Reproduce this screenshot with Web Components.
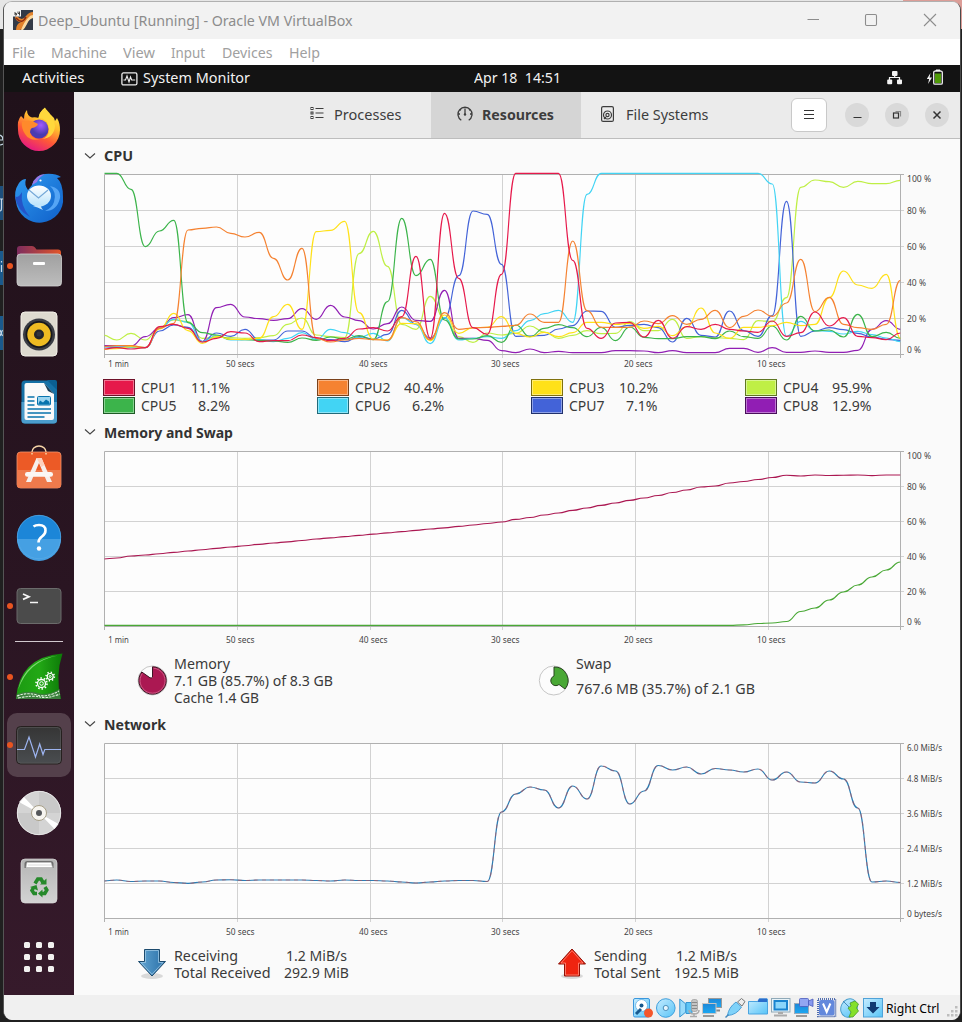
<!DOCTYPE html>
<html lang="en">
<head>
<meta charset="utf-8">
<title>Deep_Ubuntu [Running] - Oracle VM VirtualBox</title>
<style>
html,body{margin:0;height:100%;overflow:hidden;background:#1f1f1f}
body{font-family:"Noto Sans","Liberation Sans",sans-serif}
</style>
</head>
<body>
<desktop-view></desktop-view>
<script>
const define=(name,html,init)=>customElements.define(name,class extends HTMLElement{
  constructor(){super();this.attachShadow({mode:'open'})}
  connectedCallback(){this.shadowRoot.innerHTML=typeof html==='function'?html(this):html;if(init)init(this)}
});

/* Text run condensed or widened to a set width */
define('fit-text',el=>`<style>:host{display:block;flex:none;width:${el.getAttribute('w')}px;white-space:pre;overflow:visible}
span{display:inline-block;transform-origin:0 50%}</style><span></span>`,el=>{
  const s=el.shadowRoot.querySelector('span');s.textContent=el.getAttribute('t');
  const n=s.getBoundingClientRect().width;
  s.style.transform=`scaleX(${el.getAttribute('w')/n})`;
});
const T=(t,w,x=0,extra='')=>`<fit-text t="${t}" w="${w}" style="margin-left:${x}px;${extra}"></fit-text>`;

define('title-bar',`<style>:host{display:flex;height:37px;align-items:center;background:#f2f2f2;color:#8c8c8c;font-size:15px;padding-left:9px;box-sizing:border-box}
.i{display:block;flex:none}.v{margin-top:-2px}.c{margin-left:auto}fit-text{margin-top:-2px}</style>
<svg class="i v" width="20" height="20" viewBox="0 0 20 20"><rect width="20" height="20" fill="#333a47"/>
<path d="M4 6q5 6 9 0q3-4 7-4v6q-4 0-6 5q-2 5-7 7H3q0-6 5-8Q3 12 2 7z" fill="#e2822c"/><path d="M8 20q3-8 7-12q2-3 5-3v3q-4 1-6 6q-2 4-4 6z" fill="#fbd9a0"/><path d="M3 8q6 7 10-1" stroke="#8b2a10" stroke-width="1.500" fill="none"/><rect width="8" height="6.500" fill="#f4f4f4"/><path d="M2 2v3h1.500V3.500H2M5 1.500v2h1.500M6.500 1.500v4" stroke="#333" fill="none" stroke-width=".9"/></svg>
${T('Deep_Ubuntu [Running] - Oracle VM VirtualBox',314.5,5)}
<svg class="i c" width="153" height="37" viewBox="807 2 153 37" fill="none" stroke="#8d8d8d" stroke-width="1.100"><path d="M807.500 19.500h11.500M924 14l12 12M936 14l-12 12"/><rect x="865.500" y="14.500" width="11" height="11" rx="1.200"/></svg>`);

define('menu-bar',`<style>:host{display:flex;height:26px;line-height:27px;background:#fff;color:#a0a0a0;font-size:15px;padding-left:8px}</style>
${T('File',23)}${T('Machine',56,16)}${T('View',32,16)}${T('Input',34,16)}${T('Devices',50.5,17)}${T('Help',31,16.500)}`);

define('top-panel',`<style>:host{display:flex;height:27px;line-height:24px;background:#131313;color:#f2f2f2;font-size:14.300px;padding-left:18px;align-items:center}svg{flex:none}fit-text{height:26px}</style>
${T('Activities',62.5)}
<svg style="margin-left:36px" width="17" height="14" viewBox="0 0 17 14" fill="none" stroke="#eee" stroke-width="1.300"><rect x=".9" y=".9" width="15" height="12" rx="1.500"/><path d="M2.500 8h2l1.500-4l2 6l1.500-5l1.200 3h3.500" stroke-width="1.100"/></svg>
${T('System Monitor',107,5)}${T('Apr 18  14:51',87,224.500)}
<svg style="margin-left:326px" width="60" height="27" viewBox="887 65 60 27" fill="#f2f2f2"><rect x="892" y="71" width="5.500" height="5" rx="1"/><rect x="887.200" y="79.500" width="5" height="4.700" rx="1"/><rect x="897" y="79.500" width="5" height="4.700" rx="1"/><path d="M894.700 75v3M889.500 80v-2.500h10V80" fill="none" stroke="#f2f2f2" stroke-width="1.200"/>
<path d="M930.500 73l-3.700 6h2.300l-1 5l3.900-6.500h-2.400z"/><path d="M936 71v-1h4v1" stroke="#f2f2f2"/><rect x="933.700" y="71.200" width="8.600" height="13" rx="1.300" fill="none" stroke="#f2f2f2" stroke-width="1.300"/><rect x="935" y="73.500" width="6" height="9.500" fill="#4e9a06"/></svg>`);

/* Launcher artwork; every tile is 70x68 on a shared column */
const dockArt=[
[96,`<defs><linearGradient id="a" x1=".8" y1="0" x2=".3" y2="1"><stop offset="0" stop-color="#fff44f"/><stop offset=".35" stop-color="#ffbd2e"/><stop offset=".65" stop-color="#ff5a36"/><stop offset="1" stop-color="#e31587"/></linearGradient><radialGradient id="b" cx=".6" cy=".3"><stop offset="0" stop-color="#a35bff"/><stop offset="1" stop-color="#4b3bb0"/></radialGradient></defs>
<path d="M38.500 118Q40 111 45 107.500Q46 113 51 115Q54 117 55 121L57 118Q60 123 60 130A21 21 0 0 1 18 130Q17 120 21 116L24 119Q24 113 27 110Q27 116 32 117.500Q36 117 38.500 118z" fill="url(#a)"/><circle cx="39" cy="129" r="9.500" fill="url(#b)"/><path d="M22 122Q30 118 38 124Q37 127 32 128Q30 129 30 133Q33 140 41 139Q30 142 25 134Q21 128 22 122z" fill="#ff8a2b"/><path d="M38.500 118Q48 118 49 129Q49 137 42 139Q54 138 55 126Q54 117 45 108Q39 112 38.500 118Z" fill="#ffd83c"/>`],
[166,`<defs><linearGradient id="a" x1="0" y1="0" x2="1" y2="1"><stop offset="0" stop-color="#2f9bf0"/><stop offset="1" stop-color="#0f5fc9"/></linearGradient><linearGradient id="b" x1="0" y1="0" x2="0" y2="1"><stop offset="0" stop-color="#fff"/><stop offset="1" stop-color="#b9e3fb"/></linearGradient></defs>
<path d="M32 187Q35 177 45 176Q55 175 61 179L57 180Q63 185 63 199A23.500 23 0 0 1 16 204Q13 194 19 185Q22 181 26 181Q24 187 28 192z" fill="url(#a)"/><path d="M32 187Q35 177 45 176Q38 180 37 184z" fill="#9a78e5"/><path d="M15 198Q17 213 30 219Q20 208 22 194Q18 201 15 198z" fill="#2454c8"/><path d="M50 188Q57 194 54 204Q52 210 45 213Q57 213 60 200Q61 190 50 188z" fill="#55a5f5"/><ellipse cx="39" cy="198" rx="12" ry="10.500" fill="url(#b)"/><path d="M29 192l9.500 8l9.500-8" fill="none" stroke="#76a9d8" stroke-width="1.200"/><path d="M33 208q4 1 10 4q-3-4-2-5z" fill="#c8e8fb"/><circle cx="40.500" cy="182.500" r="1.100" fill="#fff"/>`],
[232,`<defs><linearGradient id="a"><stop offset="0" stop-color="#7d2c5e"/><stop offset="1" stop-color="#e2562a"/></linearGradient><linearGradient id="b" x1="0" y1="0" x2="0" y2="1"><stop offset="0" stop-color="#a0a0a0"/><stop offset="1" stop-color="#bdbdbd"/></linearGradient></defs><path d="M17 260v-11q0-3 3-3h12q2 0 3 1.500l1.500 2H58q3 0 3 3v9z" fill="url(#a)"/><rect x="17" y="254" width="44.500" height="32" rx="3.500" fill="url(#b)" stroke="#d2d2d2" stroke-width=".8"/><rect x="33" y="262" width="12" height="3" rx="1" fill="#fff"/>`,1],
[300,`<rect x="21" y="312" width="36" height="44" rx="4" fill="#dedad0" stroke="#f3f0e8"/><circle cx="39" cy="334.500" r="16" fill="#3a3c44"/><circle cx="39" cy="334.500" r="13.500" fill="#17181d"/><circle cx="39" cy="334.500" r="11.700" fill="#eebb22"/><circle cx="39" cy="334.500" r="5" fill="#23252b"/><circle cx="39" cy="334" r="2.500" fill="#32353d"/>`],
[368,`<path d="M21.500 384q0-3.500 3.500-3.500h24l8 8.500v31q0 3.500-3.500 3.500H25q-3.500 0-3.500-3.500z" fill="#1671a6"/><path d="M21.500 402H57v18q0 3.500-3.500 3.500H25q-3.500 0-3.500-3.500z" fill="#4b9dcc"/><path d="M24.500 385q0-2 2-2H44l10 11v24q0 2-2 2H26.500q-2 0-2-2z" fill="#fafafa"/><path d="M47 380h8q2 0 2 2v8z" fill="#0b5f92"/><path d="M44 383l10 11-6-3z" fill="#173e59"/><path d="M27.500 397h7M27.500 401h7M27.500 405h7M27.500 409h23.500M27.500 413h23.500M27.500 417h17" stroke="#0874ad" stroke-width="1.700"/><rect x="37.500" y="396.500" width="13" height="8.500" rx="1" fill="#9bd4ef" stroke="#0874ad"/><path d="M38 404.500l2-4 3 2 3-3 3 2 1 3z" fill="#0874ad"/>`],
[436,`<path d="M32 456V452a7 6 0 0 1 14 0V456" fill="none" stroke="#f7d6a8" stroke-width="1.500"/><rect x="17" y="452" width="44" height="36" rx="3.500" fill="#ec5a26" stroke="#f3956e" stroke-width=".8"/><path d="M17 470h44v14.500q0 3.500-3.500 3.500h-37q-3.500 0-3.500-3.500z" fill="#ef7a4c"/><path d="M32 453v1.500M46 453v1.500" stroke="#f7d6a8" stroke-width="1.500"/><path d="M36.500 458h5l10.500 24h-5l-8-19-8 19h-5z" fill="#f6efec"/><rect x="25" y="472" width="28" height="4.700" rx="2.300" fill="#fbf7f4"/><path d="M36.500 458l5 0 3 7-3 2z" fill="#ffd0bb"/>`],
[505,`<circle cx="39" cy="538" r="22" fill="#1c86d8"/><path d="M17 540h44a22 22 0 0 1-44 0z" fill="#45a0e3"/><circle cx="39" cy="538" r="21.700" fill="none" stroke="#59abe5" stroke-width=".7"/><path d="M33.500 527.500q2-1.500 5.500-1.500q6.500 0 6.500 5.500q0 3.500-3.500 6t-3.500 6" fill="none" stroke="#fff" stroke-width="2.600"/><circle cx="39" cy="549.500" r="2.200" fill="#fff"/>`],
[572,`<rect x="17" y="588.500" width="44" height="35" rx="3.500" fill="#4b4b4b" stroke="#6b6b6b"/><path d="M23 594l6 2.700-6 2.700" fill="none" stroke="#f5f5f5" stroke-width="1.700"/><path d="M30 602.500h8" stroke="#f5f5f5" stroke-width="1.500"/>`,1],
null,
[643,`<defs><linearGradient id="a"><stop offset="0" stop-color="#1c9a12"/><stop offset=".5" stop-color="#22a815"/><stop offset="1" stop-color="#0d7a08"/></linearGradient></defs><path d="M16 699Q19 657 62.500 653.500Q55 676 61 699z" fill="url(#a)"/><path d="M18 690Q25 660 58 655.500Q28 661 18 690z" fill="#7fd873"/><path d="M17 694q11-4 21-1t21.500-4l1 10H16z" fill="#3b7f3c"/><path d="M17 696q10-4 20-1t22-4M18 698q15-3 22-1t20-3" stroke="#e1f3df" fill="none" stroke-width="1.100" stroke-dasharray="2.500 1"/><g fill="none" stroke="#fff"><circle cx="41.500" cy="683.500" r="4" stroke-width="1.300"/><circle cx="41.500" cy="683.500" r="5.500" stroke-width="1.600" stroke-dasharray="1.500 1.950"/><circle cx="41.500" cy="683.500" r="1.800"/><circle cx="50.200" cy="676.500" r="3" stroke-width="1.200"/><circle cx="50.200" cy="676.500" r="4.200" stroke-width="1.500" stroke-dasharray="1.300 2"/><circle cx="50.200" cy="676.500" r="1"/></g>`,1],
[711,`<rect x="7" y="713" width="64" height="64" rx="10" fill="#54404b"/><defs><linearGradient id="a" x1="0" y1="0" x2="0" y2="1"><stop offset="0" stop-color="#353535"/><stop offset="1" stop-color="#4a4d50"/></linearGradient></defs><rect x="16.500" y="726.500" width="45" height="37.500" rx="4" fill="url(#a)" stroke="#26201f"/><rect x="17.500" y="727.500" width="43" height="35.500" rx="3.500" fill="none" stroke="#5d5d5d" stroke-width=".6"/><path d="M17 749.500h7.500L29 737l6.500 20 4.200-13 3.300 10.500 1.800-5H61" fill="none" stroke="#9db4f0" stroke-width="1.200"/>`,1],
[779,`<circle cx="39" cy="813" r="22" fill="#d4d4d4"/><path d="M39 813L39 791A22 22 0 0 1 61 813zM39 813V835A22 22 0 0 1 17 813z" fill="#c9c9c9"/><path d="M39 813L19 802L24 797zM39 813L54.500 829L58.500 824z" fill="#fff"/><circle cx="39" cy="813" r="21.700" fill="none" stroke="#eee" stroke-width=".8"/><circle cx="39" cy="813" r="7.500" fill="#f7f5f0" stroke="#a79f88"/><circle cx="39" cy="813" r="3" fill="#55575a"/>`],
[847,`<defs><linearGradient id="a" x1="0" y1="0" x2="0" y2="1"><stop offset="0" stop-color="#b4b4b4"/><stop offset="1" stop-color="#d3d3d3"/></linearGradient></defs><rect x="21" y="859" width="36" height="44" rx="4" fill="url(#a)" stroke="#dadada" stroke-width=".7"/><path d="M24.500 868v-4q0-3 3-3h23q3 0 3 3v4z" fill="#6f6f6f"/><path d="M26 867.500l1-5h24l1.500 5zM28 865h24" fill="#fff" stroke="#c2c2c2" stroke-width=".6"/><g fill="none" stroke="#26892b" stroke-width="3.600"><path d="M35 883.500l2.800-4.500h3.200l2 3.500M45 887l1.800 3-2 3.500h-3M37 893.500H34l-2-3 1.600-3"/></g><g fill="#26892b"><path d="M40 884.500l6.500 0 0-6zM42.500 889.500v8l-4.500-4zM30 887l6.500-2 1.500 5.500z"/></g>`],
[923,`<g fill="#f2f1f0"><rect x="24" y="942" width="6" height="6" rx="1.500"/><rect x="36" y="942" width="6" height="6" rx="1.500"/><rect x="48" y="942" width="6" height="6" rx="1.500"/><rect x="24" y="954" width="6" height="6" rx="1.500"/><rect x="36" y="954" width="6" height="6" rx="1.500"/><rect x="48" y="954" width="6" height="6" rx="1.500"/><rect x="24" y="966" width="6" height="6" rx="1.500"/><rect x="36" y="966" width="6" height="6" rx="1.500"/><rect x="48" y="966" width="6" height="6" rx="1.500"/></g>`]];
define('dock-tile',el=>{const [y,art,dot]=dockArt[el.getAttribute('n')];
return `<style>:host{display:block;height:68px}svg{display:block}</style><svg width="70" height="68" viewBox="4 ${y} 70 68">${art}${dot?`<circle cx="10" cy="${y+34}" r="3" fill="#e95420"/>`:''}</svg>`});
define('app-dock',`<style>:host{display:flex;flex-direction:column;box-sizing:border-box;width:70px;padding-top:4px;background:linear-gradient(#20111a,#2a1522 55%,#361a2b)}
hr{width:48px;height:1px;border:0;margin:1px auto;background:#d2c9ce;flex:none}dock-tile:last-child{margin-top:8px}</style>
${dockArt.map((a,i)=>a?`<dock-tile n="${i}"></dock-tile>`:'<hr>').join('')}`);

define('header-bar',`<style>:host{display:flex;height:46px;border-bottom:1px solid #bdbdbd;background:#ebebeb;color:#3d3d3d;font-size:14.300px;line-height:43px;box-sizing:content-box}
.tab{display:flex;align-items:center;box-sizing:border-box}fit-text{height:45px}.on{width:150px;background:#d5d5d5;font-weight:700;padding-left:26px}svg{flex:none;margin-top:-2px}
.p{width:357px;padding-left:236px}.f{padding-left:20px;width:210px}
.menu{width:34px;height:32px;border:1px solid #c9c9c9;border-radius:6px;background:#fff;margin-top:6px}
.r{width:24px;height:24px;border-radius:50%;background:#d9d9d9;margin:11px 0 0 16px}.menu+.r{margin-left:18px}.menu svg,.r svg{display:block;margin:0}</style>
<div class="tab p"><svg width="14" height="14" viewBox="310 108 14 14" fill="none" stroke="#3d3d3d"><path d="M315.500 109.500h8M315.500 114h8M315.500 118.500h8" stroke-width="1.200"/><rect x="311" y="108.500" width="2" height="2"/><rect x="311" y="113" width="2" height="2"/><rect x="311" y="117.500" width="2" height="2"/></svg>${T('Processes',67.5,10)}</div>
<div class="tab on"><svg width="16" height="16" viewBox="0 0 16 16" fill="none" stroke="#3d3d3d" stroke-width="1.300"><path d="M4.300 14.200A7 7 0 1 1 11.700 14.200M8 2.500V8M3 8H1.500M14.500 8H13M4 4.300l-.8-.8M12 4.300l.8-.8"/><circle cx="8" cy="8.500" r="1.200" fill="#3d3d3d" stroke="none"/></svg>${T('Resources',72,9)}</div>
<div class="tab f"><svg width="13" height="16" viewBox="0 0 13 16" fill="none" stroke="#3d3d3d" stroke-width="1.200"><rect x=".6" y=".6" width="11.800" height="14.800" rx="1.500"/><circle cx="6.500" cy="9" r="4"/><circle cx="6.500" cy="9" r="1.600"/><path d="M3 13l2-2"/></svg>${T('File Systems',82.500,12)}</div>
<div class="menu"><svg width="34" height="32" viewBox="0 0 34 32"><path d="M12 11.500h10M12 15.500h10M12 19.500h10" stroke="#333" stroke-width="1.200"/></svg></div>
<div class="r"><svg width="24" height="24"><path d="M8.500 14.500h8" stroke="#333" stroke-width="1.200"/></svg></div>
<div class="r"><svg width="24" height="24" fill="none" stroke="#333" stroke-width="1.200"><rect x="8.500" y="10" width="5" height="5"/><path d="M10.500 8.500h5v5" stroke="#8a8a8a"/></svg></div>
<div class="r"><svg width="24" height="24"><path d="M8.500 8.500l7 7M15.500 8.500l-7 7" stroke="#333" stroke-width="1.500"/></svg></div>`);

define('section-title',el=>`<style>:host{display:flex;align-items:center;font-weight:700;font-size:14.300px;color:#333;padding-left:10px;height:34px;box-sizing:border-box}svg{flex:none}</style>
<svg width="12" height="8" viewBox="0 0 12 8"><path d="M1 1.500l5 4.500 5-4.500" fill="none" stroke="#444" stroke-width="1.100"/></svg>${T(el.getAttribute('t'),el.getAttribute('w'),8)}`);

const step=14.25,x0=102.5;
/* Samples joined by horizontal-tangent splines */
const curve=(v,f)=>v.map((p,i)=>{const x=x0+i*step,y=f(p),m=x-step/2;return i?`C${m} ${f(v[i-1])} ${m} ${y} ${x} ${y}`:`M${x} ${y}`}).join('');
const cpu=[
['#bfef45',[510,525,505,525,487,465,470,520,517,518,520,518,512,478,459,510,515,518,266,199,304,478,493,394,460,515,532,504,510,505,483,501,520,511,497,506,505,470,497,497,463,520,515,518,520,524,467,470,398,67,45,50,67,49,56,56,46]],
['#911eb4',[542,542,543,515,490,458,449,530,428,418,456,461,466,461,431,463,421,456,467,492,476,426,466,469,376,520,520,526,557,563,552,563,559,563,563,563,557,557,558,563,557,563,563,563,550,550,562,548,562,562,558,562,562,556,493,467,493]],
['#4363d8',[545,548,545,548,498,480,487,530,504,514,493,525,525,498,498,520,524,530,515,522,508,436,478,520,460,332,138,148,298,514,513,511,492,482,438,439,487,481,478,488,531,460,511,516,438,497,514,452,109,514,498,488,494,505,516,523,526]],
['#42d4f4',[545,545,548,548,490,463,472,530,512,525,524,524,530,520,503,524,493,503,518,505,528,458,478,536,458,525,520,515,520,497,467,446,436,472,88,25,25,25,25,25,25,25,25,25,25,25,25,57,514,469,497,499,507,499,509,519,530]],
['#3cb44b',[25,25,73,245,198,166,473,503,510,523,524,526,528,532,519,526,516,523,512,524,410,160,332,283,465,522,522,512,532,480,515,490,479,488,515,487,527,486,517,521,521,515,515,521,498,515,520,483,525,454,498,495,516,448,515,502,520]],
['#ffe119',[553,551,545,548,492,445,497,535,514,523,523,520,455,418,493,200,196,169,443,522,525,475,476,527,450,505,488,487,455,505,516,502,515,503,472,472,478,475,490,484,512,485,429,504,520,487,487,482,472,482,478,398,318,360,370,328,520]],
['#f58231',[545,542,542,548,490,475,195,190,186,205,216,202,280,345,250,520,531,525,520,524,526,458,470,524,443,493,489,487,484,481,447,472,472,228,437,487,487,487,468,476,452,478,463,436,488,454,435,454,414,283,440,397,478,488,493,478,346]],
['#e6194b',[552,548,552,548,485,478,490,531,520,500,504,530,527,527,510,518,527,520,492,488,498,455,274,520,145,340,488,508,328,25,25,25,25,286,490,520,474,472,516,466,520,485,493,478,493,498,502,468,514,503,441,483,458,514,518,524,504]]];
const mem=[559,558,556,555,553.7,552.4,551,549.7,548.3,547,545.7,544.3,543,541.8,540.5,539,537.8,536.6,535.3,534.1,532.8,531.6,530.3,529,527.8,526.4,525,523.5,522,519.4,517.5,515,513,510.300,508,505.300,503,500.300,498,495.500,492.500,490,487,486,483,481.500,479.500,477.500,475.200,476,475,475.500,475.200,475,475.600,475,475];
const swap=[...Array(45).fill(625.3),624.900,623.500,623,621.500,611.500,608,600,592,585,577,570,562];
const net=[881,880,881.5,881,881,882.500,883.300,882,880,879.700,880.500,880,880,880,880,880.500,881,880,880.500,880.500,881,882,883,882,881,880.500,880.500,881.500,812,794,787,790,808,786,799,766,771,804,791,765.500,770,767,774,768.500,770,772,769,780,772,782,783,771,779,808,882,881,882.500];
define('load-graph',el=>{
  const kind=el.getAttribute('kind'),top={cpu:174,mem:451,net:743}[kind],h=kind==='cpu'?180:175,b=top+h;
  const ys=[0,1,2,3,4,5].map(i=>top+i*h/5+.5),xs=[104.5,237.5,370.5,502.5,635.5,768.5,900.5];
  const yl=kind==='net'?['6.0 MiB/s','4.8 MiB/s','3.6 MiB/s','2.4 MiB/s','1.2 MiB/s','0 bytes/s']:['100 %','80 %','60 %','40 %','20 %','0 %'];
  const yw=kind==='net'?[35,35,35,35,35,35]:[24,19,19,19,19,14];
  const xl=['1 min','50 secs','40 secs','30 secs','20 secs','10 secs'],xp=[108.3,226,359,491,624,757];
  let lines='';
  if(kind==='cpu')lines=cpu.map(([c,v])=>`<path d="${curve(v,p=>+(165+p/3).toFixed(2))}" stroke="${c}"/>`).join('');
  if(kind==='mem')lines=`<path d="${curve(mem,p=>p)}" stroke="#ab1852"/><path d="${curve(swap,p=>p)}" stroke="#49a835"/>`;
  if(kind==='net')lines=`<path d="${curve(net,p=>p)}" stroke="#2d7db3"/><path d="${curve(net,p=>p)}" stroke="#d04a4a" stroke-opacity=".5" stroke-dasharray="4 4"/>`;
  return `<style>:host{display:block;height:200px}svg{display:block}text{font:9.200px "Noto Sans",sans-serif;fill:#454545}</style>
<svg width="886" height="200" viewBox="74 ${top-2} 886 200"><defs><clipPath id="c"><rect x="104.500" y="${top-2}" width="796" height="${h+4}"/></clipPath></defs>
<rect x="104.500" y="${top+.5}" width="796" height="${h}" fill="#fdfdfd"/>
<path d="${ys.slice(1,5).map(y=>`M104 ${y}H904`).join('')}${xs.slice(1,6).map(x=>`M${x} ${top}V${b+4}`).join('')}" stroke="#d2d2d2" fill="none"/>
<path d="M104.500 ${b+4}V${top+.5}H904M900.500 ${top}V${b+4}M104 ${b+.5}H904" stroke="#b0b0b0" fill="none"/>
<g clip-path="url(#c)" fill="none" stroke-width="1.150">${lines}</g>
${yl.map((t,i)=>`<text x="907" y="${(i===0?top+8:i===5?b-1:ys[i]+3.5)}" textLength="${yw[i]}" lengthAdjust="spacingAndGlyphs">${t}</text>`).join('')}
${xl.map((t,i)=>`<text x="${xp[i]}" y="${b+(kind==='cpu'?13:17)}" textLength="${i?28.5:20.5}" lengthAdjust="spacingAndGlyphs">${t}</text>`).join('')}</svg>`});

define('cpu-key',el=>`<style>:host{display:flex;align-items:center;height:18px;width:214px;color:#3a3a3a;font-size:14.300px;line-height:18px}
i{box-sizing:border-box;width:32px;height:17px;flex:none;align-self:flex-start;background:${el.getAttribute('c')};border:1px solid ${el.getAttribute('d')};box-shadow:inset 0 0 0 1px rgba(255,255,255,.4)}
.v{width:53px;display:flex;justify-content:flex-end}</style><i></i>${T(el.getAttribute('t'),35.5,6)}<div class="v">${T(el.getAttribute('v'),el.getAttribute('w'))}</div>`);
define('cpu-legend',`<style>:host{display:grid;grid-template-columns:repeat(4,214px);grid-auto-rows:18px;margin:7px 0 0 29px;height:36px}</style>
${[['CPU1','11.1%',39,'#e6194b','#6e1028'],['CPU2','40.4%',40,'#f58231','#7a411a'],['CPU3','10.2%',39,'#ffe119','#80710d'],['CPU4','95.9%',40,'#bfef45','#5f7722'],['CPU5','8.2%',32,'#3cb44b','#1e5a25'],['CPU6','6.2%',32,'#42d4f4','#216a7a'],['CPU7','7.1%',31.5,'#4363d8','#21316c'],['CPU8','12.9%',39.5,'#911eb4','#480f5a']].map(a=>`<cpu-key t="${a[0]}" v="${a[1]}" w="${a[2]}" c="${a[3]}" d="${a[4]}"></cpu-key>`).join('')}`);

define('memory-stats',`<style>:host{display:flex;height:52px;margin-top:6px;padding-left:62px;color:#3a3a3a;font-size:14.300px;line-height:17px}svg{flex:none;margin:10px 5px 0 0}.m{width:362.500px}.s fit-text+fit-text{line-height:34px;height:34px}</style>
<svg width="32" height="32" viewBox="136 665 32 32"><circle cx="152.500" cy="680.500" r="14.500" fill="#fcfcfc" stroke="#c6c6c6"/><path d="M152.500 666.800A13.700 13.700 0 1 1 141.800 672L150 677.800Q151.500 678.500 152.500 677z" fill="#ab1852" stroke="#3c1523" stroke-width="1"/><path d="M153.500 668.200A12.500 12.500 0 1 1 142.300 673.500" fill="none" stroke="#d4678f" stroke-width=".8"/></svg>
<div class="m" style="margin-left:1px">${T('Memory',56)}${T('7.1 GB (85.7%) of 8.3 GB',159)}${T('Cache 1.4 GB',85)}</div>
<svg width="32" height="32" viewBox="537.500 665 32 32"><circle cx="554.300" cy="680.500" r="14.500" fill="#fcfcfc" stroke="#c6c6c6"/><path d="M554.500 667A13.500 13.500 0 0 1 565.500 689L559.500 684.500A5 5 0 1 1 554.500 676z" fill="#49a835" stroke="#28451f" stroke-width="1"/></svg>
<div class="s" style="margin-left:2px">${T('Swap',35.500)}${T('767.6 MB (35.7%) of 2.1 GB',179)}</div>`);

define('network-stats',`<style>:host{display:flex;height:34px;margin-top:6px;padding-left:62px;color:#3a3a3a;font-size:14.300px;line-height:17px}svg{flex:none;margin-top:1px}.l{width:110px}.v{width:208px}fit-text[w="61"]{transform:translateX(2px)}</style>
<svg width="38" height="33" viewBox="136 948 38 33"><defs><linearGradient id="a"><stop offset="0" stop-color="#62a5d2"/><stop offset="1" stop-color="#2a70a8"/></linearGradient></defs><ellipse cx="152" cy="976" rx="11" ry="3" fill="#000" opacity=".13"/><path d="M144.500 949.500h15v12h6l-13.500 14.500l-13.500-14.500h6z" fill="url(#a)" stroke="#1c4a6d"/><path d="M145.500 950.500h13v12h4.500l-11 11.800-11-11.800h4.500z" fill="none" stroke="#a8d0ea" stroke-width=".7"/></svg>
<div class="l">${T('Receiving',64)}${T('Total Received',96.500)}</div><div class="v">${T('1.2 MiB/s',61)}${T('292.9 MiB',65)}</div>
<svg style="margin-left:64px" width="38" height="33" viewBox="556 948 38 33"><ellipse cx="572" cy="976" rx="11" ry="3" fill="#000" opacity=".13"/><path d="M564.500 976v-12h-6l13.500-15l13.500 15h-6v12z" fill="#ef2410" stroke="#8e1007"/><path d="M565.500 975v-12h-4.500l11-12.300 11 12.300h-4.500v12z" fill="none" stroke="#ff8d7c" stroke-width=".8"/></svg>
<div class="l" style="width:80px">${T('Sending',53)}${T('Total Sent',66.500)}</div><div class="v">${T('1.2 MiB/s',61)}${T('192.5 MiB',65)}</div>`);

define('system-monitor',`<style>:host{display:block;flex:1;background:#fafafa}.a{height:33px}.b{height:34px}.n{height:34px}</style>
<header-bar></header-bar>
<section-title class="a" t="CPU" w="29"></section-title><load-graph kind="cpu"></load-graph><cpu-legend></cpu-legend>
<section-title class="b" t="Memory and Swap" w="129"></section-title><load-graph kind="mem"></load-graph><memory-stats></memory-stats>
<section-title class="n" t="Network" w="62"></section-title><load-graph kind="net"></load-graph><network-stats></network-stats>`);

define('status-bar',`<style>:host{display:flex;height:25px;background:#f0f0f0;color:#000;font-size:13.300px;line-height:26px;justify-content:flex-end}svg{flex:none;display:block}</style>
<svg width="251" height="25" viewBox="633 995 251 25"><defs><linearGradient id="a" x1="0" y1="0" x2="1" y2="1"><stop offset="0" stop-color="#c7ecff"/><stop offset="1" stop-color="#57c4f7"/></linearGradient><linearGradient id="b" x1="0" y1="0" x2="0" y2="1"><stop offset="0" stop-color="#1f87d6"/><stop offset="1" stop-color="#1ca8f2"/></linearGradient></defs>
<rect x="633.500" y="998.500" width="16" height="18.500" rx="1.500" fill="url(#a)" stroke="#3a97dd"/><circle cx="641.500" cy="1005.500" r="6" fill="#fff" stroke="#4da5e0" stroke-width=".7"/><circle cx="641.500" cy="1005.500" r="2" fill="#18598e"/><path d="M636 1014l5-5" stroke="#18598e" stroke-width="3"/><circle cx="648.500" cy="1013" r="4.500" fill="#f4562b"/>
<circle cx="665.800" cy="1008" r="9.300" fill="url(#a)" stroke="#3f9fdc"/><circle cx="665.800" cy="1008" r="2.600" fill="#e4f5fd" stroke="#4b8eba"/>
<path d="M679.800 999l6 5v8l-6 5z" fill="#9adcfb" stroke="#3796d3"/><path d="M686 1002.500h6v11h-6z" fill="#5cc4f5" stroke="#3796d3"/><rect x="691.500" y="999.500" width="6" height="12" rx="2" fill="#c4c4c4" stroke="#999" stroke-width=".7"/><path d="M692 1002.500h5M692 1005.500h5M692 1008.500h5" stroke="#888"/><path d="M689 1010q0 4 5 4t5-4M694 1013v3M690 1016.500h7" fill="none" stroke="#aaa" stroke-width="1.500"/>
<rect x="708.500" y="998.500" width="13" height="9" fill="url(#b)" stroke="#9a9a9a"/><path d="M716 1010.500h4" stroke="#888" stroke-width="2"/><rect x="702.500" y="1003.500" width="13.500" height="10" fill="url(#b)" stroke="#c5c5c5"/><path d="M703 1016h11" stroke="#999" stroke-width="2"/>
<path d="M737.500 1002l4-3.500 3.500 3-3 4.500z" fill="#eee" stroke="#777"/><path d="M727.500 1015.500q1-8 8.500-13.500l5.500 5q-5 8-14 8.500z" fill="#7fd2f9" stroke="#4b9fd7"/><path d="M725.500 1017.500l3-3" stroke="#4488bb" stroke-width="1.500"/>
<path d="M748.500 1001.500h9l2-2.500h8v15h-19z" fill="url(#a)" stroke="#4aa4e0"/><path d="M757.500 1002l1.500-3.500h8v3.500z" fill="#2a6dcc"/>
<rect x="771.500" y="998.500" width="18.500" height="13.500" fill="#e9f3f8" stroke="#8fa9b8"/><rect x="774.500" y="1001" width="12.500" height="8.500" fill="#8bd6fb" stroke="#1a84d0" stroke-width="2"/><path d="M774 1015.500h13M778 1013h5" stroke="#aaa" stroke-width="2"/>
<rect x="794.500" y="1003.500" width="14" height="10" fill="url(#b)" stroke="#9ab"/><path d="M796 1016h11" stroke="#999" stroke-width="2"/><rect x="799.500" y="998.500" width="9" height="8" rx="1" fill="#93a6f2" stroke="#4a5bbd" stroke-width=".8"/><path d="M808.500 1001l4.500-2v7.500l-4.500-2z" fill="#8799ee" stroke="#4a5bbd" stroke-width=".8"/>
<rect x="818" y="999" width="17.500" height="17.500" fill="none" stroke="#24489c" stroke-dasharray="1 1" stroke-width="1.600"/><rect x="819" y="1000" width="15.500" height="15.500" rx="2" fill="#6288dc"/><path d="M823 1003.500l3.700 8.500 3.700-8.500" fill="none" stroke="#fff" stroke-width="2"/>
<ellipse cx="849" cy="1008" rx="8" ry="9.500" fill="url(#a)" stroke="#4b9fcc" transform="rotate(25 849 1008)"/><path d="M849 1007l-6-6" stroke="#4488bb"/><path d="M850 1003l5-2 3.500 3-2 4 2 3-5.500 6h-4l2-5-3-4 3-2z" fill="#84e02a" stroke="#4a9a2d" stroke-width=".8"/>
<rect x="863.500" y="998.500" width="19" height="18.500" fill="url(#a)" stroke="#4fa2d8"/><path d="M870 1002h6v5h3.500l-6.500 6.500-6.500-6.500h3.500z" fill="#103a72"/></svg>
${T('Right Ctrl',53.500,1.500)}
<svg style="margin:10px 1px 0 8px" width="12" height="14" viewBox="0 0 12 14" fill="#bdbdbd"><path d="M8 1h2.500v2.500H8zM8 5h2.500v2.500H8zM8 9h2.500v2.500H8zM4 5h2.500v2.500H4zM4 9h2.500v2.500H4zM0 9h2.500v2.500H0z"/></svg>`);

define('desktop-view',`<style>:host{display:block;width:962px;height:1022px;box-sizing:border-box;padding:1px 1px 1px 3px;position:relative;overflow:hidden;
background:linear-gradient(#4a4a4a,#4a4a4a) 3px 29px/1px 980px no-repeat,linear-gradient(#1d4f7c,#1d4f7c) 0 186px/4px 34px no-repeat,linear-gradient(#1a598c,#1a598c) 0 251px/4px 34px no-repeat,linear-gradient(#1a598c,#1a598c) 0 316px/4px 34px no-repeat,linear-gradient(#dc9d97,#dc9d97) 903px 0/59px 29px no-repeat,linear-gradient(#e6e6e6,#e6e6e6) 0 0/903px 29px no-repeat,#202020}
.w{display:flex;flex-direction:column;border:1px solid #b0b0b0;border-color:#b0b0b0 #4b4b4b #3a3a3a #555;border-bottom-width:0;box-sizing:border-box;width:958px;height:1019px;border-radius:9px;overflow:hidden;background:#f0f0f0}
.g{display:flex;height:903px}
.behind{position:absolute;left:0;top:0;width:3px;height:400px;overflow:hidden}
.behind svg{display:block}</style>
<div class="behind"><svg width="3" height="400" fill="none" stroke="#c8d8e8" stroke-width="1.200"><path d="M0 135q3 1 3 5h-3M0 145q2 0 3-1M0 199h3M1.500 199v9q0 3-1.500 3M1.500 265v7M1.500 261v1.500M0 330l2.500 6M2.500 330l-2.500 6"/></svg></div>
<div class="w"><title-bar></title-bar><menu-bar></menu-bar><top-panel></top-panel><div class="g"><app-dock></app-dock><system-monitor></system-monitor></div><status-bar></status-bar></div>`);
</script>
</body>
</html>
